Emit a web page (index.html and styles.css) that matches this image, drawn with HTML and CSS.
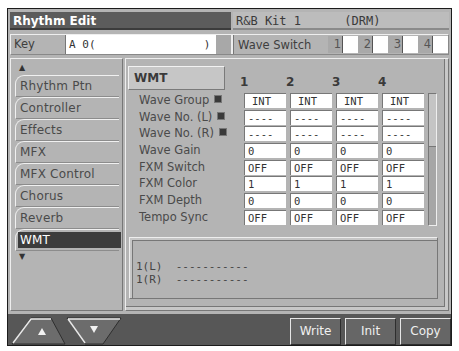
FILE: index.html
```html
<!DOCTYPE html>
<html lang="en">

<head>
    <meta charset="UTF-8">
    <title>Rhythm Edit</title>
    <link rel="stylesheet" href="styles.css">
</head>

<body>

    <div class="screen">
        <div class="titlebar">
            <div class="title">Rhythm Edit</div>
            <div class="kit">R&amp;B Kit 1      (DRM)</div>
        </div>

        <div class="keyrow">
            <div class="key-label">Key</div>
            <div class="key-value"><span>A 0(</span><span>)</span></div>
            <div class="key-pad"></div>
            <div class="switches">
                <span class="sw-label">Wave Switch</span>
                <span class="sw-num">1</span><span class="sw-box"></span>
                <span class="sw-num">2</span><span class="sw-box"></span>
                <span class="sw-num">3</span><span class="sw-box"></span>
                <span class="sw-num">4</span><span class="sw-box"></span>
            </div>
        </div>

        <div class="main">
            <div class="tabs">
                <div class="arrow">&#9650;</div>
                <div class="tab">Rhythm Ptn</div>
                <div class="tab">Controller</div>
                <div class="tab">Effects</div>
                <div class="tab">MFX</div>
                <div class="tab">MFX Control</div>
                <div class="tab">Chorus</div>
                <div class="tab">Reverb</div>
                <div class="tab active"><span>WMT</span></div>
                <div class="arrow">&#9660;</div>
            </div>

            <div class="panel">
                <div class="panel-head">
                    <div class="head-box">WMT</div>
                    <div class="col-nums">
                        <span>1</span><span>2</span><span>3</span><span>4</span>
                    </div>
                </div>

                <div class="table-wrap">
                    <div class="params">
                        <div class="label">Wave Group <i class="lk"></i></div>
                        <div class="cell c">INT</div><div class="cell c">INT</div><div class="cell c">INT</div><div class="cell c">INT</div>

                        <div class="label">Wave No. (L) <i class="lk"></i></div>
                        <div class="cell">----</div><div class="cell">----</div><div class="cell">----</div><div class="cell">----</div>

                        <div class="label">Wave No. (R) <i class="lk"></i></div>
                        <div class="cell">----</div><div class="cell">----</div><div class="cell">----</div><div class="cell">----</div>

                        <div class="label">Wave Gain</div>
                        <div class="cell">0</div><div class="cell">0</div><div class="cell">0</div><div class="cell">0</div>

                        <div class="label">FXM Switch</div>
                        <div class="cell">OFF</div><div class="cell">OFF</div><div class="cell">OFF</div><div class="cell">OFF</div>

                        <div class="label">FXM Color</div>
                        <div class="cell">1</div><div class="cell">1</div><div class="cell">1</div><div class="cell">1</div>

                        <div class="label">FXM Depth</div>
                        <div class="cell">0</div><div class="cell">0</div><div class="cell">0</div><div class="cell">0</div>

                        <div class="label">Tempo Sync</div>
                        <div class="cell">OFF</div><div class="cell">OFF</div><div class="cell">OFF</div><div class="cell">OFF</div>
                    </div>
                    <div class="scrollbar"><div class="thumb"></div></div>
                </div>

                <div class="wave-box">
                    <div class="wave-line">1(L)  -----------</div>
                    <div class="wave-line">1(R)  -----------</div>
                </div>
            </div>
        </div>

        <div class="footer">
            <svg class="nav" width="112" height="28" viewBox="0 0 112 28">
                <polygon points="1,27 20,1 40,1 54,27" fill="#6c6c6c" stroke="#2e2e2e" stroke-width="1"/>
                <polyline points="2,26 20,2 40,2" fill="none" stroke="#e8e8e8" stroke-width="1.5"/>
                <polygon points="27,18 31,11 35,18" fill="#f2f2f2"/>
                <polygon points="56,1 110,1 92,27 74,27" fill="#6c6c6c" stroke="#2e2e2e" stroke-width="1"/>
                <polyline points="57,2 109,2" fill="none" stroke="#e8e8e8" stroke-width="1.5"/>
                <polyline points="57,2 74,26" fill="none" stroke="#e8e8e8" stroke-width="1.5"/>
                <polygon points="79,9 87,9 83,16" fill="#f2f2f2"/>
            </svg>
            <div class="buttons">
                <div class="btn">Write</div>
                <div class="btn">Init</div>
                <div class="btn">Copy</div>
            </div>
        </div>
    </div>

</body>

</html>
```

FILE: styles.css
```css
body {
    margin: 0;
    padding: 8px 0 0 7px;
    background: #ffffff;
    font-family: "DejaVu Sans", sans-serif;
    font-size: 11.5px;
    color: #444;
}

.screen {
    width: 445px;
    height: 338px;
    box-sizing: border-box;
    border: 1px solid #1c1c1c;
    background: #b4b4b4;
    padding: 3px 2px 0 2px;
    display: flex;
    flex-direction: column;
}

/* top bar */

.titlebar {
    display: flex;
    height: 18px;
}

.title {
    width: 218px;
    background: #5c5c5c;
    color: #fff;
    font-weight: bold;
    font-size: 12px;
    line-height: 18px;
    padding-left: 3px;
    border-bottom: 2px solid #3c3c3c;
}

.kit {
    flex: 1;
    margin-left: 2px;
    background: #bcbcbc;
    border-bottom: 2px solid #8a8a8a;
    font-family: "DejaVu Sans Mono", monospace;
    font-size: 12px;
    line-height: 18px;
    white-space: pre;
    color: #3a3a3a;
    padding-left: 3px;
}

/* key row */

.keyrow {
    display: flex;
    height: 19px;
    margin-top: 4px;
    border: 1px solid #eee;
    border-right-color: #888;
    border-bottom-color: #888;
}

.key-label {
    width: 52px;
    padding-left: 3px;
    line-height: 19px;
    border-right: 1px solid #777;
    color: #3e3e3e;
}

.key-value {
    width: 144px;
    background: #fff;
    display: flex;
    justify-content: space-between;
    padding: 0 6px 0 3px;
    font-family: "DejaVu Sans Mono", monospace;
    font-size: 11px;
    line-height: 19px;
    color: #333;
}

.key-pad {
    width: 15px;
    background: #a8a8a8;
    border-right: 2px solid #eee;
}

.switches {
    flex: 1;
    display: flex;
    align-items: center;
    padding-left: 4px;
    border-left: 1px solid #777;
}

.sw-label {
    width: 90px;
    color: #3e3e3e;
}

.sw-num {
    width: 13px;
    height: 17px;
    line-height: 17px;
    text-align: right;
    padding-right: 1px;
    background: #a9a9a9;
    border-right: 1px solid #555;
    color: #555;
}

.sw-box {
    width: 15px;
    height: 17px;
    background: #fff;
}

/* main area */

.main {
    flex: 1;
    display: flex;
    margin-top: 3px;
    gap: 2px;
}

.tabs {
    width: 113px;
    box-sizing: border-box;
    border: 1px solid #eee;
    border-right-color: #777;
    border-bottom-color: #777;
    padding: 3px 0 0 4px;
    display: flex;
    flex-direction: column;
}

.arrow {
    font-size: 8px;
    height: 13px;
    line-height: 12px;
    padding-left: 4px;
    color: #333;
}

.tab {
    height: 22px;
    box-sizing: border-box;
    line-height: 21px;
    padding-left: 4px;
    border-top: 1px solid #f0f0f0;
    border-left: 1px solid #f0f0f0;
    border-bottom: 1px solid #8c8c8c;
    border-top-left-radius: 9px;
    margin-right: 3px;
    color: #4a4a4a;
    font-size: 12px;
    letter-spacing: 0.2px;
}

.tab.active {
    padding: 2px 0 0 2px;
    line-height: normal;
}

.tab.active span {
    display: block;
    background: #3c3c3c;
    color: #fff;
    height: 16px;
    line-height: 16px;
    padding-left: 2px;
    margin-right: -2px;
}

.panel {
    flex: 1;
    box-sizing: border-box;
    border: 1px solid #eee;
    border-right-color: #777;
    border-bottom-color: #777;
    box-shadow: inset -3px -3px 0 #c8c8c8, inset -4px -4px 0 #777;
    padding: 7px 0 0 2px;
    display: flex;
    flex-direction: column;
}

.panel-head {
    display: flex;
    height: 24px;
}

.head-box {
    width: 90px;
    background: #c6c6c6;
    border: 1px solid #f2f2f2;
    border-right-color: #7a7a7a;
    border-bottom-color: #7a7a7a;
    font-weight: bold;
    font-size: 12px;
    color: #3a3a3a;
    padding-left: 5px;
    line-height: 22px;
}

.col-nums {
    display: flex;
    padding: 9px 0 0 15px;
    gap: 34px;
    font-weight: bold;
    font-size: 12px;
    color: #3a3a3a;
}

.col-nums span {
    width: 12px;
}

.table-wrap {
    display: flex;
    margin-top: 3px;
}

.params {
    display: grid;
    grid-template-columns: 101px repeat(4, 42px);
    grid-auto-rows: 15px;
    column-gap: 4px;
    row-gap: 1.67px;
    padding-left: 11px;
}

.label {
    line-height: 15px;
    color: #4a4a4a;
    white-space: nowrap;
}

.lk {
    display: inline-block;
    width: 6px;
    height: 6px;
    background: #3a3a3a;
    border: 1px solid #777;
    vertical-align: 1px;
    margin-left: 1px;
}

.cell {
    background: #fff;
    border-top: 1px solid #777;
    border-left: 1px solid #777;
    font-family: "DejaVu Sans Mono", monospace;
    font-size: 10.5px;
    line-height: 14px;
    padding-left: 3px;
    color: #333;
}

.cell.c {
    padding-left: 7px;
}

.scrollbar {
    width: 9px;
    height: 133px;
    margin-left: 4px;
    box-sizing: border-box;
    border: 1px solid #777;
    border-right-color: #eee;
    border-bottom-color: #eee;
    background: #a6a6a6;
}

.thumb {
    height: 52px;
    background: #c4c4c4;
    border-bottom: 1px solid #777;
}

.wave-box {
    margin: 11px 10px 0 1px;
    height: 62px;
    box-sizing: border-box;
    border: 1px solid #eee;
    border-right-color: #777;
    border-bottom-color: #777;
    box-shadow: inset 2px 2px 0 #c6c6c6, inset 3px 3px 0 #777;
    padding: 22px 0 0 6px;
    font-family: "DejaVu Sans Mono", monospace;
    font-size: 11px;
    line-height: 13px;
    color: #444;
}

.wave-line {
    white-space: pre;
}

/* footer */

.footer {
    height: 31px;
    margin: 3px -2px 0 -2px;
    background: #575757;
    display: flex;
    align-items: flex-end;
    justify-content: space-between;
    padding: 0 0 0 3px;
}

.nav {
    display: block;
}

.buttons {
    display: flex;
    gap: 4px;
}

.btn {
    width: 51px;
    height: 27px;
    box-sizing: border-box;
    background: #666;
    border: 1px solid #e6e6e6;
    border-right-color: #2e2e2e;
    border-bottom-color: #2e2e2e;
    color: #f0f0f0;
    text-align: center;
    line-height: 25px;
    font-size: 12px;
}
```
